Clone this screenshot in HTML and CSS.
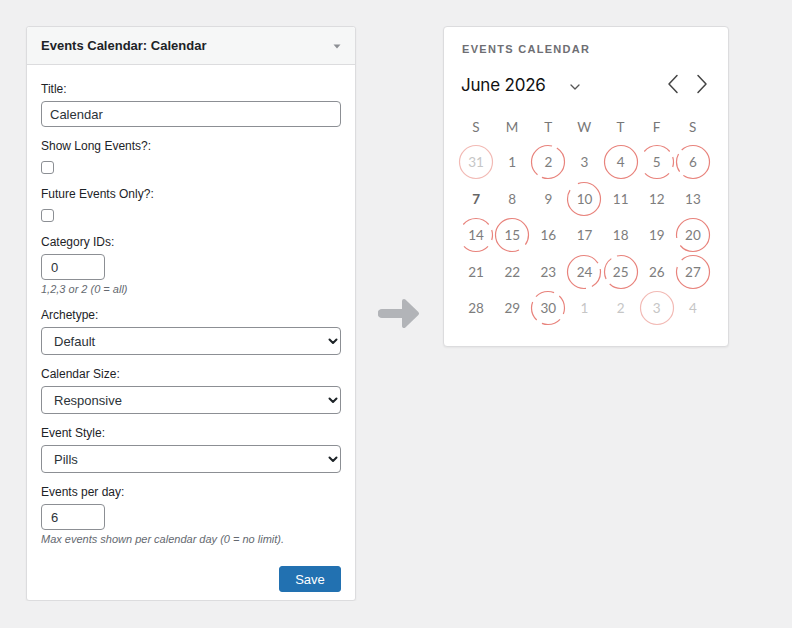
FILE: index.html
```html
<!DOCTYPE html>
<html>
<head>
<meta charset="utf-8">
<link rel="stylesheet" href="styles.css">
</head>
<body>
<div class="page">
  <div class="widget">
    <div class="widget-head">
      <span class="widget-title">Events Calendar: Calendar</span>
      <svg class="head-caret" width="8" height="5" viewBox="0 0 8 5"><path d="M0.5 0.5 L7.5 0.5 L4 4.5 Z" fill="#8c8f94"/></svg>
    </div>
    <div class="widget-body">
      <div class="field">
        <label class="lbl">Title:</label>
        <input class="txt full" type="text" value="Calendar">
      </div>
      <div class="field field-check">
        <label class="lbl">Show Long Events?:</label>
        <span class="check"></span>
      </div>
      <div class="field field-check">
        <label class="lbl">Future Events Only?:</label>
        <span class="check"></span>
      </div>
      <div class="field">
        <label class="lbl">Category IDs:</label>
        <input class="txt small" type="text" value="0">
        <div class="help">1,2,3 or 2 (0 = all)</div>
      </div>
      <div class="field">
        <label class="lbl">Archetype:</label>
        <div class="sel-wrap">
          <select class="sel"><option>Default</option></select>
          <svg class="sel-chev" width="10" height="7" viewBox="0 0 10 7"><path d="M1.5 1.5 L5 5 L8.5 1.5" fill="none" stroke="#1d2327" stroke-width="2" stroke-linecap="round" stroke-linejoin="round"/></svg>
        </div>
      </div>
      <div class="field">
        <label class="lbl">Calendar Size:</label>
        <div class="sel-wrap">
          <select class="sel"><option>Responsive</option></select>
          <svg class="sel-chev" width="10" height="7" viewBox="0 0 10 7"><path d="M1.5 1.5 L5 5 L8.5 1.5" fill="none" stroke="#1d2327" stroke-width="2" stroke-linecap="round" stroke-linejoin="round"/></svg>
        </div>
      </div>
      <div class="field">
        <label class="lbl">Event Style:</label>
        <div class="sel-wrap">
          <select class="sel"><option>Pills</option></select>
          <svg class="sel-chev" width="10" height="7" viewBox="0 0 10 7"><path d="M1.5 1.5 L5 5 L8.5 1.5" fill="none" stroke="#1d2327" stroke-width="2" stroke-linecap="round" stroke-linejoin="round"/></svg>
        </div>
      </div>
      <div class="field last">
        <label class="lbl">Events per day:</label>
        <input class="txt small" type="text" value="6">
        <div class="help">Max events shown per calendar day (0 = no limit).</div>
      </div>
      <div class="actions">
        <button class="save">Save</button>
      </div>
    </div>
  </div>

  <div class="arrow-col">
    <svg class="arrow" width="44" height="34" viewBox="0 0 44 34">
      <path d="M4 16.5 L26 16.5" stroke="#b2b4b8" stroke-width="9" stroke-linecap="round" fill="none"/>
      <path d="M26 4 L39 16.5 L26 29 Z" fill="#b2b4b8" stroke="#b2b4b8" stroke-width="4" stroke-linejoin="round"/>
    </svg>
  </div>

  <div class="cal">
    <div class="cal-heading">EVENTS CALENDAR</div>
    <div class="cal-top">
      <div class="month">
        <span class="month-name">June 2026</span>
        <svg class="month-chev" width="10" height="6" viewBox="0 0 10 6"><path d="M1 1 L5 5 L9 1" fill="none" stroke="#555" stroke-width="1.3" stroke-linecap="round" stroke-linejoin="round"/></svg>
      </div>
      <div class="nav">
        <svg width="14" height="20" viewBox="0 0 14 20"><path d="M11 1.5 L3 10 L11 18.5" fill="none" stroke="#444" stroke-width="1.5" stroke-linecap="round" stroke-linejoin="round"/></svg>
        <svg width="14" height="20" viewBox="0 0 14 20"><path d="M3 1.5 L11 10 L3 18.5" fill="none" stroke="#444" stroke-width="1.5" stroke-linecap="round" stroke-linejoin="round"/></svg>
      </div>
    </div>
    <div class="grid">
      <div class="wd">S</div><div class="wd">M</div><div class="wd">T</div><div class="wd">W</div><div class="wd">T</div><div class="wd">F</div><div class="wd">S</div>

      <div class="day other"><svg class="ring light" viewBox="0 0 36 36"><circle cx="18" cy="18" r="16.5" pathLength="100"/></svg><span>31</span></div>
      <div class="day"><span>1</span></div>
      <div class="day"><svg class="ring" viewBox="0 0 36 36"><circle cx="18" cy="18" r="16.5" pathLength="100" stroke-dasharray="4 5 47 5 39"/></svg><span>2</span></div>
      <div class="day"><span>3</span></div>
      <div class="day"><svg class="ring" viewBox="0 0 36 36"><circle cx="18" cy="18" r="16.5" pathLength="100"/></svg><span>4</span></div>
      <div class="day"><svg class="ring" viewBox="0 0 36 36"><circle cx="18" cy="18" r="16.5" pathLength="100" stroke-dasharray="14 6 10 7 26 23 14"/></svg><span>5</span></div>
      <div class="day"><svg class="ring" viewBox="0 0 36 36"><circle cx="18" cy="18" r="16.5" pathLength="100" stroke-dasharray="60 5 18 5 12"/></svg><span>6</span></div>

      <div class="day today"><span>7</span></div>
      <div class="day"><span>8</span></div>
      <div class="day"><span>9</span></div>
      <div class="day"><svg class="ring" viewBox="0 0 36 36"><circle cx="18" cy="18" r="16.5" pathLength="100" stroke-dasharray="84 10 6"/></svg><span>10</span></div>
      <div class="day"><span>11</span></div>
      <div class="day"><span>12</span></div>
      <div class="day"><span>13</span></div>

      <div class="day"><svg class="ring" viewBox="0 0 36 36"><circle cx="18" cy="18" r="16.5" pathLength="100" stroke-dasharray="14 6 10 7 26 23 14"/></svg><span>14</span></div>
      <div class="day"><svg class="ring" viewBox="0 0 36 36"><circle cx="18" cy="18" r="16.5" pathLength="100" stroke-dasharray="35 8 57"/></svg><span>15</span></div>
      <div class="day"><span>16</span></div>
      <div class="day"><span>17</span></div>
      <div class="day"><span>18</span></div>
      <div class="day"><span>19</span></div>
      <div class="day"><svg class="ring" viewBox="0 0 36 36"><circle cx="18" cy="18" r="16.5" pathLength="100" stroke-dasharray="64 8 28"/></svg><span>20</span></div>

      <div class="day"><span>21</span></div>
      <div class="day"><span>22</span></div>
      <div class="day"><span>23</span></div>
      <div class="day"><svg class="ring" viewBox="0 0 36 36"><circle cx="18" cy="18" r="16.5" pathLength="100" stroke-dasharray="16 6 20 6 52"/></svg><span>24</span></div>
      <div class="day"><svg class="ring" viewBox="0 0 36 36"><circle cx="18" cy="18" r="16.5" pathLength="100" stroke-dasharray="62 6 22 6 4"/></svg><span>25</span></div>
      <div class="day"><span>26</span></div>
      <div class="day"><svg class="ring" viewBox="0 0 36 36"><circle cx="18" cy="18" r="16.5" pathLength="100" stroke-dasharray="80 8 12"/></svg><span>27</span></div>

      <div class="day"><span>28</span></div>
      <div class="day"><span>29</span></div>
      <div class="day"><svg class="ring" viewBox="0 0 36 36"><circle cx="18" cy="18" r="16.5" pathLength="100" stroke-dasharray="6 6 19 6 19 6 19 6 13"/></svg><span>30</span></div>
      <div class="day other"><span>1</span></div>
      <div class="day other"><span>2</span></div>
      <div class="day other"><svg class="ring light" viewBox="0 0 36 36"><circle cx="18" cy="18" r="16.5" pathLength="100"/></svg><span>3</span></div>
      <div class="day other"><span>4</span></div>
    </div>
  </div>
</div>
</body>
</html>
```

FILE: styles.css
```css
* { box-sizing: border-box; }

html, body {
  margin: 0;
  padding: 0;
  background: #f0f0f1;
}

body {
  font-family: "Liberation Sans", Arial, sans-serif;
  color: #1d2327;
}

.page {
  display: flex;
  align-items: flex-start;
  padding: 26px 0 0 26px;
}

/* ---------- widget form ---------- */
.widget {
  width: 330px;
  background: #fff;
  border: 1px solid #dcdcde;
  border-radius: 3px;
  box-shadow: 0 1px 2px rgba(0,0,0,0.05);
}

.widget-head {
  height: 38px;
  background: #f6f7f7;
  border-bottom: 1px solid #dcdcde;
  border-radius: 3px 3px 0 0;
  display: flex;
  align-items: center;
  justify-content: space-between;
  padding: 0 14px 0 14px;
}

.widget-title {
  font-size: 13px;
  font-weight: bold;
  color: #1d2327;
}

.head-caret {
  margin-top: 1px;
}

.widget-body {
  padding: 16px 14px 8px 14px;
}

.field {
  margin-bottom: 11px;
}

.field-check {
  margin-bottom: 12px;
}

.lbl {
  display: block;
  font-size: 12px;
  line-height: 16px;
  color: #1d2327;
  margin-bottom: 4px;
}

.field-check .lbl {
  margin-bottom: 7px;
}

.check {
  display: block;
  width: 13px;
  height: 13px;
  border: 1px solid #8c8f94;
  border-radius: 3px;
  background: #fff;
}

.txt {
  display: block;
  height: 26px;
  border: 1px solid #8c8f94;
  border-radius: 4px;
  padding: 0 8px;
  font-family: "Liberation Sans", Arial, sans-serif;
  font-size: 13px;
  color: #2c3338;
  background: #fff;
  outline: none;
}

.txt.full { width: 300px; }
.txt.small { width: 64px; padding-left: 9px; }

.help {
  font-size: 11px;
  font-style: italic;
  color: #646970;
  line-height: 14px;
  margin-top: 2px;
}

.sel-wrap {
  position: relative;
  width: 300px;
}

.sel {
  display: block;
  width: 300px;
  height: 28px;
  border: 1px solid #8c8f94;
  border-radius: 4px;
  padding: 0 24px 0 12px;
  font-family: "Liberation Sans", Arial, sans-serif;
  font-size: 13px;
  color: #2c3338;
  background: #fff;
  appearance: none;
  -webkit-appearance: none;
  outline: none;
}

.sel-chev {
  position: absolute;
  right: 3px;
  top: 11px;
}

.field.last { margin-bottom: 0; }

.actions {
  display: flex;
  justify-content: flex-end;
  margin-top: 20px;
}

.save {
  width: 62px;
  height: 26px;
  background: #2271b1;
  color: #fff;
  border: 1px solid #2271b1;
  border-radius: 3px;
  font-family: "Liberation Sans", Arial, sans-serif;
  font-size: 13px;
  padding: 0;
}

/* ---------- arrow ---------- */
.arrow-col {
  width: 87px;
  display: flex;
  justify-content: center;
  padding-top: 271px;
}

.arrow {
  display: block;
}

/* ---------- calendar ---------- */
.cal {
  width: 286px;
  background: #fff;
  border: 1px solid #dcdcde;
  border-radius: 4px;
  box-shadow: 0 1px 2px rgba(0,0,0,0.05);
  padding: 15px 17px 19px 14px;
  font-family: "Lato", "Inter", sans-serif;
}

.cal-heading {
  font-family: "Liberation Sans", Arial, sans-serif;
  font-size: 11px;
  font-weight: bold;
  letter-spacing: 1.3px;
  line-height: 14px;
  color: #6e6e73;
  padding-left: 4px;
}

.cal-top {
  display: flex;
  align-items: center;
  justify-content: space-between;
  height: 24px;
  margin-top: 17px;
  padding-left: 3px;
}

.month {
  display: flex;
  align-items: center;
}

.month-name {
  font-family: "Inter", sans-serif;
  font-size: 17px;
  color: #111;
  letter-spacing: -0.2px;
}

.month-chev {
  margin-left: 24px;
  margin-top: 3px;
}

.nav {
  display: flex;
  gap: 15px;
  padding-right: 2px;
  margin-top: -3px;
}

.nav svg { display: block; }

.grid {
  display: grid;
  grid-template-columns: repeat(7, 1fr);
  grid-template-rows: 34px;
  grid-auto-rows: 36.5px;
  margin-top: 13px;
  width: 253px;
}

.wd {
  display: flex;
  align-items: center;
  justify-content: center;
  font-size: 13.5px;
  color: #777;
  letter-spacing: 0.3px;
}

.day {
  position: relative;
  display: flex;
  align-items: center;
  justify-content: center;
  font-size: 13.5px;
  color: #7d7d7d;
}

.day span {
  position: relative;
}

.day.other { color: #c6c6c6; }

.day.today { color: #666; font-weight: bold; }

.ring {
  position: absolute;
  left: 50%;
  top: 50%;
  width: 36px;
  height: 36px;
  margin: -18px 0 0 -18px;
  transform: rotate(-90deg);
}

.ring circle {
  fill: none;
  stroke: #e8837c;
  stroke-width: 1.2;
}

.ring.light circle {
  stroke: #f2bab5;
}
```
